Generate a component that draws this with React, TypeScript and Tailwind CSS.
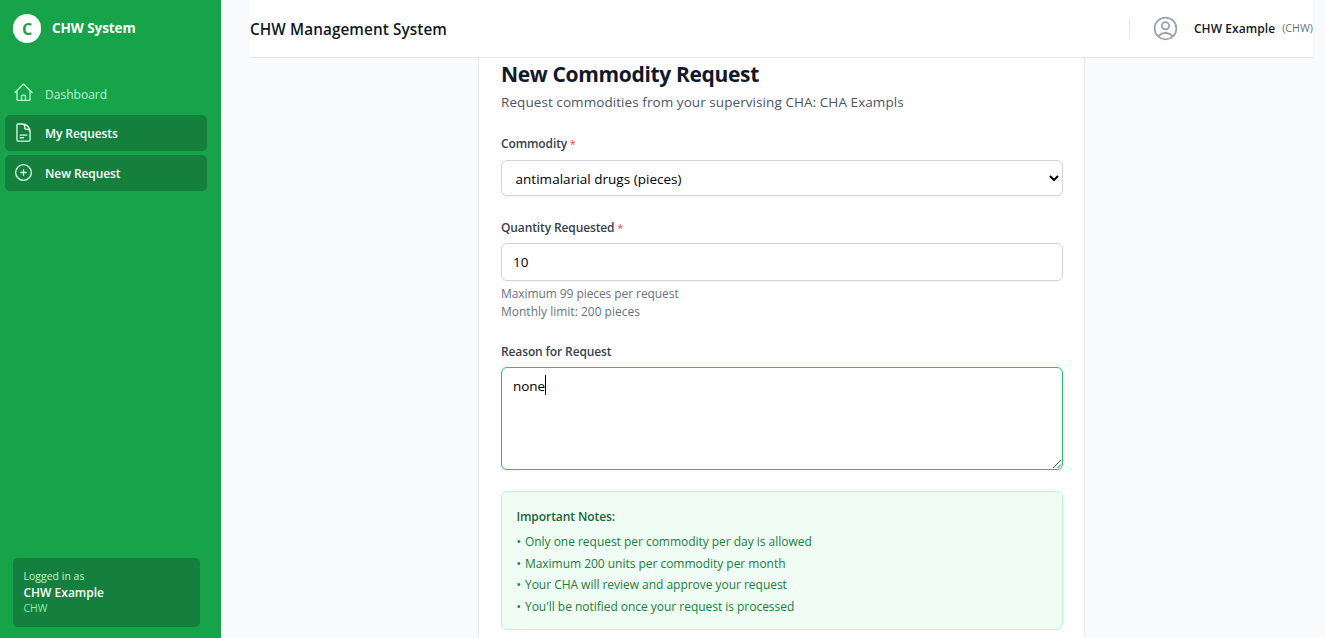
import type { ReactNode } from "react";
import {
  HiOutlineDocumentText,
  HiOutlineHome,
  HiOutlinePlusCircle,
  HiOutlineUserCircle,
} from "react-icons/hi2";

const notes = [
  "Only one request per commodity per day is allowed",
  "Maximum 200 units per commodity per month",
  "Your CHA will review and approve your request",
  "You'll be notified once your request is processed",
];

function NavItem({ icon, label, active }: { icon: ReactNode; label: string; active?: boolean }) {
  return (
    <a
      className={
        active
          ? "flex h-9 items-center rounded-[5px] bg-[#15803d] pl-2 text-[12px] font-semibold text-white"
          : "flex h-9 items-center rounded-[5px] pl-2 text-[12px] font-medium text-[#bbf7d0]"
      }
    >
      <span className={active ? "mr-[11px] mb-px text-[#dcfce7]" : "mr-[11px] mb-px text-[#bbf7d0]"}>
        {icon}
      </span>
      <span className={active ? "pt-px tracking-[-0.08px]" : "pt-[3px] tracking-[0.02px]"}>{label}</span>
    </a>
  );
}

function Label({ children, required }: { children: string; required?: boolean }) {
  return (
    <label className="block h-[18px] text-[12px] leading-[18px] font-semibold tracking-[-0.12px] text-[#374151]">
      {children}
      {required && <span className="text-[11px] font-normal text-[#ef4444]"> *</span>}
    </label>
  );
}

export default function App() {
  return (
    <div className="flex h-[638px] w-[1325px] overflow-hidden bg-[#f9fafb] font-['Open_Sans','Noto_Sans',sans-serif]">
      <aside className="flex w-[221px] shrink-0 flex-col bg-[#16a34a]">
        <div className="flex h-[57px] items-center pl-[13px]">
          <div className="flex h-[29px] w-7 items-center justify-center rounded-full bg-white pt-px text-[16px] font-bold text-[#16a34a]">
            C
          </div>
          <span className="ml-[11px] text-[13.5px] font-bold tracking-[-0.08px] text-white">
            CHW System
          </span>
        </div>
        <nav className="mt-[18px] flex flex-1 flex-col gap-1 pr-[14px] pl-[5px]">
          <NavItem icon={<HiOutlineHome className="size-[21px]" />} label="Dashboard" />
          <NavItem icon={<HiOutlineDocumentText className="size-[21px]" />} label="My Requests" active />
          <NavItem icon={<HiOutlinePlusCircle className="size-[21px]" />} label="New Request" active />
        </nav>
        <div className="mb-[11px] ml-[13px] h-[69px] w-[187px] rounded-[5px] bg-[#15803d] pt-[11px] pl-[10.5px]">
          <p className="text-[10.5px] leading-[14px] text-[#bbf7d0]">Logged in as</p>
          <p className="text-[12px] leading-[19px] font-semibold text-white">CHW Example</p>
          <p className="text-[10.5px] leading-[13px] text-[#86efac]">CHW</p>
        </div>
      </aside>

      <div className="flex min-w-0 flex-1 flex-col pr-3 pl-[29px]">
        <header className="flex h-[58px] shrink-0 items-center border-b border-[#e5e7eb] bg-white">
          <h1 className="flex-1 pt-[2px] text-[15.3px] font-semibold tracking-[0.09px] text-[#111827]">
            CHW Management System
          </h1>
          <div className="mr-[21px] h-[21px] w-px bg-[#e5e7eb]" />
          <HiOutlineUserCircle className="size-[29px] text-[#9ca3af]" />
          <span className="ml-[14px] text-[12px] font-semibold tracking-[0.07px] text-[#111827]">
            CHW Example
          </span>
          <span className="ml-[7px] text-[10.7px] text-[#6b7280]">(CHW)</span>
        </header>

        <main className="ml-[228px] h-[580px] w-[607px] border-x border-[#e5e7eb] bg-white pr-[21px] pl-[22px]">
          <h2 className="h-8 text-[21px] leading-8 font-bold tracking-[-0.34px] text-[#111827]">
            New Commodity Request
          </h2>
          <p className="mt-[2px] h-5 text-[13.5px] leading-5 tracking-[0.07px] text-[#4b5563]">
            Request commodities from your supervising CHA: CHA Exampls
          </p>

          <div className="mt-[23px]">
            <Label required>Commodity</Label>
            <div className="mt-[7px] flex h-9 items-center justify-between rounded-[6px] border border-[#d1d5db] bg-white pr-[3px] pl-[13.5px] shadow-xs">
              <span className="pt-[2px] text-[13.5px] tracking-[0.03px] text-black">
                antimalarial drugs (pieces)
              </span>
              <svg className="h-[6px] w-[10px]" viewBox="0 0 10 6" fill="none" stroke="#000" strokeWidth="2">
                <path d="M1 1l4 4 4-4" />
              </svg>
            </div>
          </div>

          <div className="mt-[23px]">
            <Label required>Quantity Requested</Label>
            <input
              className="mt-[6px] block h-[38px] w-full rounded-[6px] border border-[#d1d5db] bg-white px-[11px] text-[13.5px] text-black shadow-xs outline-none"
              defaultValue="10"
            />
            <div className="mt-1 text-[12px] leading-[18px] text-[#6b7280]">
              <p className="w-max tracking-[-0.08px]">Maximum 99 pieces per request</p>
              <p className="w-max">Monthly limit: 200 pieces</p>
            </div>
          </div>

          <div className="mt-[22px]">
            <Label>Reason for Request</Label>
            <div className="relative mt-[6px] flex h-[103px] rounded-[6px] border border-[#22c55e] bg-white pt-[8px] pl-[11px] shadow-xs">
              <span className="w-8 text-[13.5px] leading-5 tracking-[-0.1px] text-black">none</span>
              <span className="-mt-px h-5 w-px bg-black" />
              <svg
                className="absolute right-px bottom-px size-[8px]"
                viewBox="0 0 8 8"
                stroke="#555"
                strokeWidth="1"
              >
                <path d="M0 8L8 0M4.5 8L8 4.5" />
              </svg>
            </div>
          </div>

          <section className="mt-[21px] h-[139px] rounded-[6px] border border-[#bbf7d0] bg-[#f0fdf4] pt-4 pl-[14.4px]">
            <h3 className="text-[12px] leading-[18px] font-semibold tracking-[-0.07px] text-[#166534]">
              Important Notes:
            </h3>
            <ul className="mt-[5px] text-[12px] leading-[21.6px] tracking-[-0.03px] text-[#15803d]">
              {notes.map((note) => (
                <li key={note}>
                  <span className="mr-px">•</span> {note}
                </li>
              ))}
            </ul>
          </section>
        </main>
      </div>
    </div>
  );
}
